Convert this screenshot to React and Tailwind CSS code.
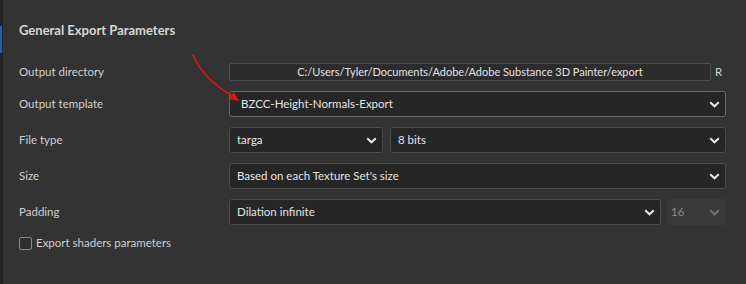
import React from 'react';

// Small chevron used by the dropdowns
const Chevron = ({ className = 'text-[#e6e6e6]' }) => (
    <svg width="11" height="7" viewBox="0 0 11 7" className={className}>
        <polyline points="1.2,1.2 5.5,5.3 9.8,1.2" fill="none" stroke="currentColor" strokeWidth="2" />
    </svg>
);

const Select = ({ value, className = '', bright = false }) => (
    <div
        className={`h-[26px] flex items-center justify-between pl-[7px] pr-[5px] rounded-[3px] bg-[#262626] border ${bright ? 'border-[#6a6a6a] pl-[11px]' : 'border-[#4b4b4b]'} ${className}`}
    >
        <span className="text-[11.5px] leading-[16px] text-[#e4e4e4]">{value}</span>
        <Chevron />
    </div>
);

const Row = ({ label, children }) => (
    <div className="flex items-center">
        <div className="w-[210px] text-[11.5px] leading-[16px] text-[#cfcfcf]">{label}</div>
        <div className="flex-1 flex items-center">{children}</div>
    </div>
);

export default function App() {
    return (
        <div
            className="relative w-[746px] h-[284px] bg-[#333333] flex overflow-hidden"
            style={{ fontFamily: 'Lato, "Noto Sans", sans-serif' }}
        >
            {/* Left edge strip with active marker */}
            <div className="w-[3px] bg-[#242424] flex flex-col">
                <div className="h-[26px]" />
                <div className="h-[27px] w-[2px] bg-[#2360b0]" />
            </div>

            <div className="flex-1 pl-[16px] pr-[20px]">
                <div className="pt-[22px] text-[13px] leading-[16px] font-bold text-[#d6d6d6]">General Export Parameters</div>

                <div className="mt-[25px] flex flex-col gap-[10px]">
                    <Row label="Output directory">
                        <div className="h-[18px] w-[482px] flex items-center justify-center rounded-[2px] bg-[#2c2c2c] border border-[#4e4e4e] text-[11px] leading-[16px] text-[#e2e2e2]">
                            C:/Users/Tyler/Documents/Adobe/Adobe Substance 3D Painter/export
                        </div>
                        <span className="ml-[4px] text-[11.5px] text-[#d0d0d0]">R</span>
                    </Row>
                    <Row label="Output template">
                        <Select value="BZCC-Height-Normals-Export" className="flex-1" bright />
                    </Row>
                    <Row label="File type">
                        <Select value="targa" className="w-[154px]" />
                        <Select value="8 bits" className="flex-1 ml-[7px]" />
                    </Row>
                    <Row label="Size">
                        <Select value="Based on each Texture Set's size" className="flex-1" />
                    </Row>
                    <Row label="Padding">
                        <Select value="Dilation infinite" className="flex-1" />
                        <div className="ml-[6px] w-[59px] h-[26px] flex items-center justify-between pl-[4px] pr-[6px] rounded-[2px] bg-[#3a3a3a]">
                            <span className="text-[11.5px] text-[#8a8a8a]">16</span>
                            <Chevron className="text-[#6e6e6e]" />
                        </div>
                    </Row>
                </div>

                <div className="mt-[10px] flex items-center gap-[4px]">
                    <div className="w-[13px] h-[13px] rounded-[2px] border border-[#8a8a8a] bg-[#2f2f2f]" />
                    <span className="text-[11.5px] leading-[16px] text-[#cfcfcf]">Export shaders parameters</span>
                </div>
            </div>

            {/* Red annotation arrow */}
            <svg className="absolute left-0 top-0 pointer-events-none" width="746" height="284">
                <path d="M193 55 Q 204 80 233 96" fill="none" stroke="#d41616" strokeWidth="1.8" strokeLinecap="round" />
                <polygon points="239,101 228,99 234,92" fill="#d41616" />
            </svg>
        </div>
    );
}
